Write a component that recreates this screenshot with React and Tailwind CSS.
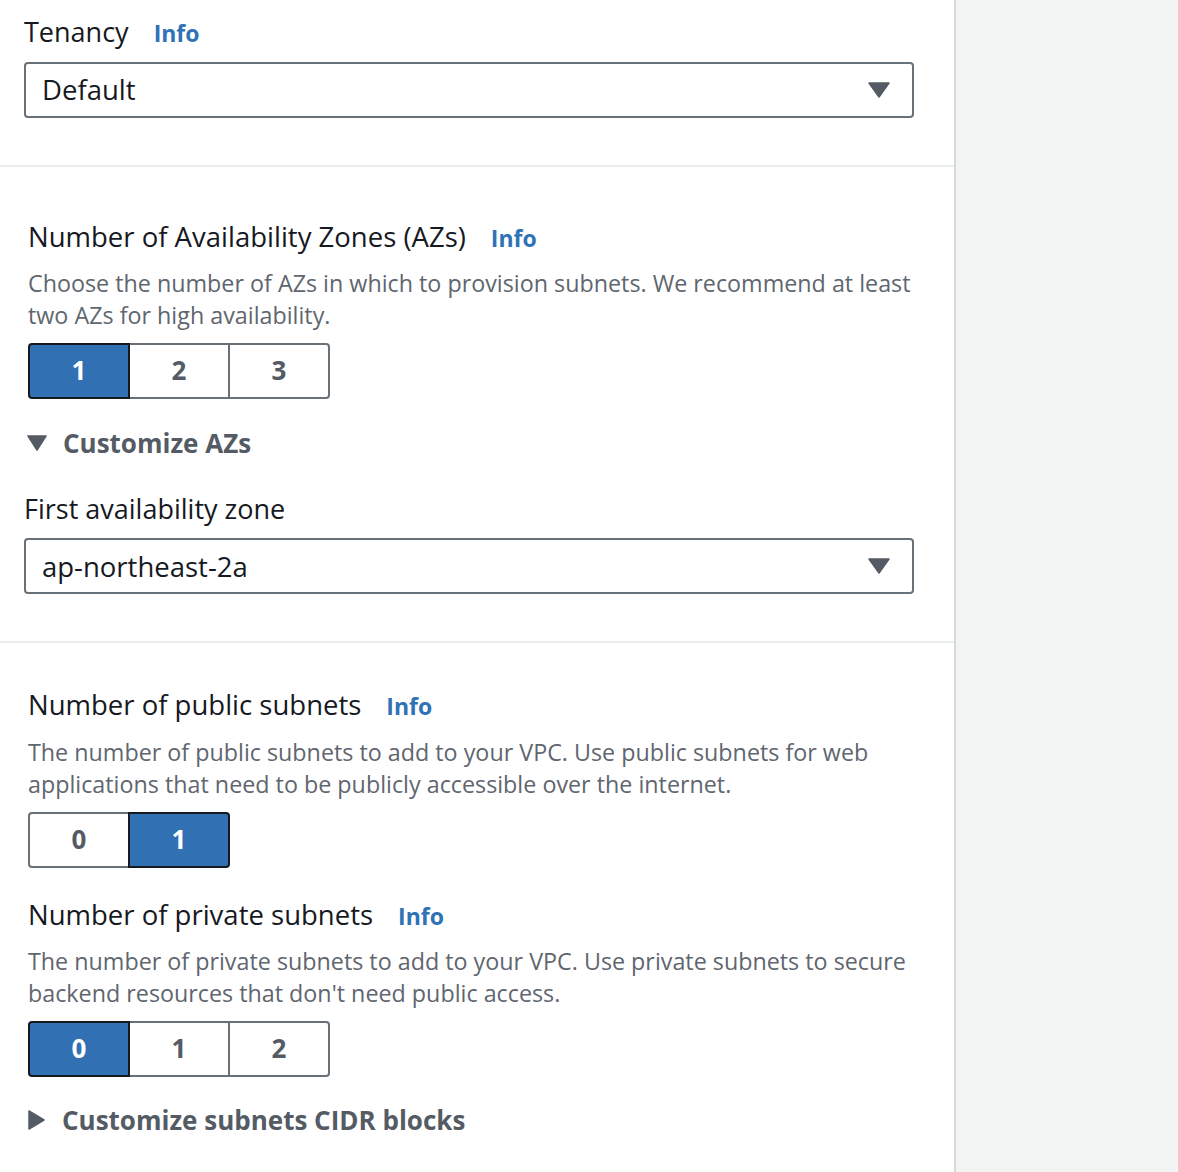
import React from "react";

const font = { fontFamily: '"Open Sans", "Noto Sans", Arial, sans-serif' };

function Info() {
  return <span className="ml-[25px] text-[23px] font-bold text-[#2f72b5]">Info</span>;
}

function Select({ value }) {
  return (
    <div className="flex h-[56px] w-[890px] items-center justify-between rounded-[4px] border-2 border-[#687078] pl-[16px] pr-[22px]">
      <span className="text-[27.5px] text-[#16191f]">{value}</span>
      <svg width="22" height="16" viewBox="0 0 22 16">
        <path d="M1 1 H21 L11 15 Z" fill="#545b64" stroke="#545b64" strokeWidth="1.5" strokeLinejoin="round" />
      </svg>
    </div>
  );
}

function Segments({ items, selected }) {
  return (
    <div className="flex">
      {items.map((n, i) => {
        const on = n === selected;
        const edge =
          i === 0 ? "rounded-l-[4px]" : i === items.length - 1 ? "rounded-r-[4px] -ml-[2px]" : "-ml-[2px]";
        return (
          <div
            key={n}
            className={
              "flex h-[56px] w-[102px] items-center justify-center border-2 text-[26px] font-bold " +
              edge +
              (on
                ? " relative z-10 border-[#16191f] bg-[#3070b3] text-white"
                : " border-[#687078] bg-white text-[#545b64]")
            }
          >
            {n}
          </div>
        );
      })}
    </div>
  );
}

function Expander({ label, open }) {
  return (
    <div className="flex items-center">
      {open ? (
        <svg width="20" height="16" viewBox="0 0 20 16" className="ml-[-1px]">
          <path d="M1 1 H19 L10 15 Z" fill="#545b64" stroke="#545b64" strokeWidth="1.5" strokeLinejoin="round" />
        </svg>
      ) : (
        <svg width="18" height="20" viewBox="0 0 18 20">
          <path d="M1 1 V19 L16 10 Z" fill="#545b64" stroke="#545b64" strokeWidth="1.5" strokeLinejoin="round" />
        </svg>
      )}
      <span className="ml-[16px] text-[26px] font-bold text-[#545b64]">{label}</span>
    </div>
  );
}

function Heading({ children }) {
  return (
    <div className="flex items-baseline">
      <span className="text-[27.5px] text-[#16191f]">{children}</span>
      <Info />
    </div>
  );
}

function Desc({ children }) {
  return <p className="mt-[10px] text-[23.3px] leading-[32px] text-[#5f666f]">{children}</p>;
}

export default function App() {
  return (
    <div className="flex h-[1172px] w-full overflow-hidden bg-[#f2f3f3]" style={font}>
      <div className="w-[956px] shrink-0 border-r-2 border-[#d5dbdb] bg-white">
        <div className="px-[24px] pt-[12px] pb-[47px]">
          <div className="flex items-baseline">
            <span className="text-[27px] text-[#16191f]">Tenancy</span>
            <Info />
          </div>
          <div className="mt-[9px]">
            <Select value="Default" />
          </div>
        </div>
        <div className="h-[2px] bg-[#eaeded]" />

        <div className="px-[28px] pt-[49px] pb-[47px]">
          <Heading>Number of Availability Zones (AZs)</Heading>
          <Desc>
            Choose the number of AZs in which to provision subnets. We recommend at least two AZs for high
            availability.
          </Desc>
          <div className="mt-[12px]">
            <Segments items={["1", "2", "3"]} selected="1" />
          </div>
          <div className="mt-[25px]">
            <Expander label="Customize AZs" open />
          </div>
          <div className="-ml-[4px] mt-[26px]">
            <span className="text-[27px] text-[#16191f]">First availability zone</span>
            <div className="mt-[9px]">
              <Select value="ap-northeast-2a" />
            </div>
          </div>
        </div>
        <div className="h-[2px] bg-[#eaeded]" />

        <div className="px-[28px] pt-[41px]">
          <Heading>Number of public subnets</Heading>
          <Desc>
            The number of public subnets to add to your VPC. Use public subnets for web applications that need to be
            publicly accessible over the internet.
          </Desc>
          <div className="mt-[12px]">
            <Segments items={["0", "1"]} selected="1" />
          </div>
          <div className="mt-[26px]">
            <Heading>Number of private subnets</Heading>
          </div>
          <Desc>
            The number of private subnets to add to your VPC. Use private subnets to secure backend resources that
            don't need public access.
          </Desc>
          <div className="mt-[12px]">
            <Segments items={["0", "1", "2"]} selected="0" />
          </div>
          <div className="mt-[24px]">
            <Expander label="Customize subnets CIDR blocks" />
          </div>
        </div>
      </div>
      <div className="flex-1" />
    </div>
  );
}
